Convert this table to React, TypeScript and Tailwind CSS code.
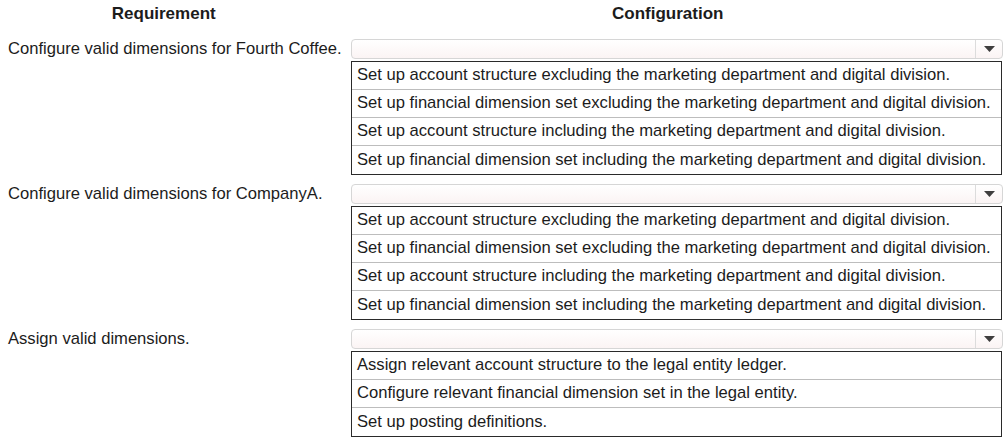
import React from "react";

const groups = [
  {
    label: "Configure valid dimensions for Fourth Coffee.",
    options: [
      "Set up account structure excluding the marketing department and digital division.",
      "Set up financial dimension set excluding the marketing department and digital division.",
      "Set up account structure including the marketing department and digital division.",
      "Set up financial dimension set including the marketing department and digital division.",
    ],
  },
  {
    label: "Configure valid dimensions for CompanyA.",
    options: [
      "Set up account structure excluding the marketing department and digital division.",
      "Set up financial dimension set excluding the marketing department and digital division.",
      "Set up account structure including the marketing department and digital division.",
      "Set up financial dimension set including the marketing department and digital division.",
    ],
  },
  {
    label: "Assign valid dimensions.",
    options: [
      "Assign relevant account structure to the legal entity ledger.",
      "Configure relevant financial dimension set in the legal entity.",
      "Set up posting definitions.",
    ],
  },
];

function Dropdown() {
  return (
    <div className="flex h-[20px] w-[652px] rounded-[4px] border border-[#d6d6d6] bg-gradient-to-b from-[#ffffff] to-[#fbf4f4]">
      <div className="flex-1" />
      <div className="flex w-[27px] items-center justify-center border-l border-[#dcdcdc]">
        <svg width="11" height="6" viewBox="0 0 11 6">
          <polygon points="0,0 11,0 5.5,6" fill="#3f3f3f" />
        </svg>
      </div>
    </div>
  );
}

export default function App() {
  return (
    <div
      className="h-[440px] w-[1008px] bg-white text-[#1c1c1c]"
      style={{ fontFamily: '"Liberation Sans", Arial, sans-serif' }}
    >
      <div className="flex h-[28px] items-center text-[17px] font-bold">
        <div className="w-[334px] text-center">Requirement</div>
        <div className="w-[694px] text-center">Configuration</div>
      </div>
      <div className="mt-[11px] flex flex-col gap-[9px]">
        {groups.map((g, i) => (
          <div key={i} className="flex">
            <div className="flex h-[20px] w-[351px] items-center whitespace-nowrap pl-[8px] text-[16.6px] leading-none">
              {g.label}
            </div>
            <div className="flex flex-col gap-[2px]">
              <Dropdown />
              <div className="w-[651px] border border-[#2a2a2a] divide-y divide-[#bdbdbd]">
                {g.options.map((o, j) => (
                  <div
                    key={j}
                    className="flex h-[28px] items-center whitespace-nowrap pl-[5px] text-[16.6px] leading-none"
                  >
                    {o}
                  </div>
                ))}
              </div>
            </div>
          </div>
        ))}
      </div>
    </div>
  );
}
